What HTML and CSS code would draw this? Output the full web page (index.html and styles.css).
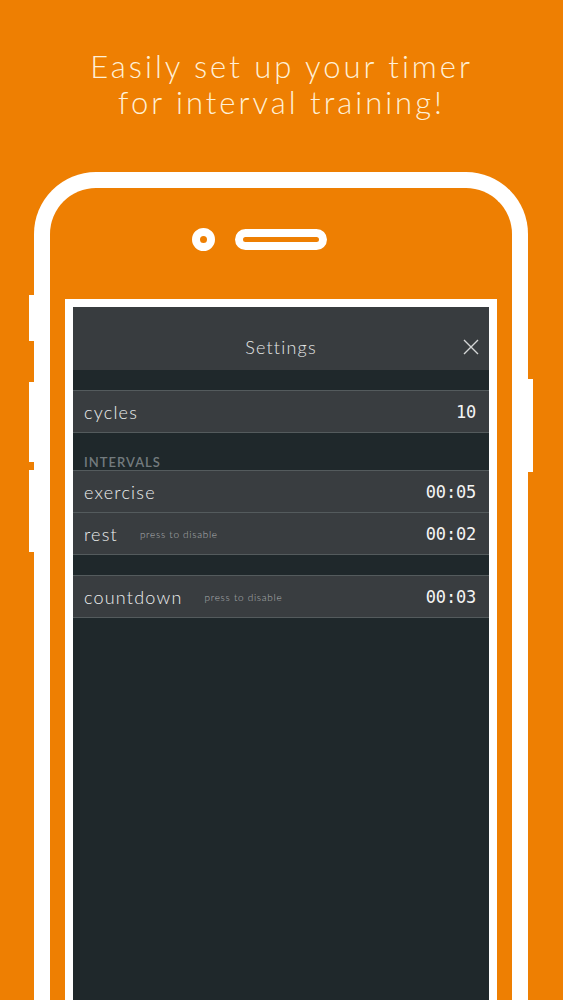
FILE: index.html
```html
<!DOCTYPE html>
<html lang="en">

<head>
    <meta charset="UTF-8">
    <meta name="viewport" content="width=device-width, initial-scale=1.0">
    <title>Interval Timer - Settings</title>
    <link rel="stylesheet" href="styles.css">
</head>

<body>
    <h1 class="headline">Easily set up your timer<br>for interval training!</h1>

    <div class="phone">
        <span class="side-btn left btn-1"></span>
        <span class="side-btn left btn-2"></span>
        <span class="side-btn left btn-3"></span>
        <span class="side-btn right btn-4"></span>

        <div class="phone-top">
            <span class="camera"></span>
            <span class="speaker"></span>
        </div>

        <div class="screen">
            <div class="screen-inner">
                <header class="bar">
                    <span class="bar-title">Settings</span>
                    <svg class="close" width="16" height="16" viewBox="0 0 16 16">
                        <path d="M1 1 L15 15 M15 1 L1 15" stroke="#d4d6d6" stroke-width="1.4" fill="none" />
                    </svg>
                </header>

                <div class="group first">
                    <div class="row">
                        <span class="label">cycles</span>
                        <span class="value">10</span>
                    </div>
                </div>

                <div class="section-title">INTERVALS</div>

                <div class="group">
                    <div class="row">
                        <span class="label">exercise</span>
                        <span class="value">00:05</span>
                    </div>
                    <div class="row">
                        <span class="label">rest</span>
                        <span class="hint">press to disable</span>
                        <span class="value">00:02</span>
                    </div>
                </div>

                <div class="group spaced">
                    <div class="row">
                        <span class="label">countdown</span>
                        <span class="hint">press to disable</span>
                        <span class="value">00:03</span>
                    </div>
                </div>
            </div>
        </div>
    </div>
</body>

</html>
```

FILE: styles.css
```css
body {
    margin: 0;
    padding: 0;
    height: 1000px;
    overflow: hidden;
    background-color: #ee7f02;
    font-family: Lato, "Open Sans", sans-serif;
}

.headline {
    margin: 0;
    padding-top: 48px;
    text-align: center;
    font-size: 31px;
    font-weight: 300;
    line-height: 36px;
    letter-spacing: 3px;
    color: #fff0d6;
}

/* phone outline */
.phone {
    position: relative;
    margin: 52px 0 0 34px;
    width: 462px;
    height: 900px;
    border: 16px solid #ffffff;
    border-bottom: none;
    border-radius: 62px 62px 0 0;
}

.side-btn {
    position: absolute;
    width: 5px;
    background-color: #ffffff;
}

.side-btn.left {
    left: -21px;
}

.side-btn.right {
    right: -21px;
}

.btn-1 {
    top: 107px;
    height: 46px;
}

.btn-2 {
    top: 194px;
    height: 80px;
}

.btn-3 {
    top: 282px;
    height: 82px;
}

.btn-4 {
    top: 191px;
    height: 93px;
}

.phone-top {
    display: flex;
    align-items: center;
    gap: 20px;
    padding: 40px 0 0 142px;
    height: 23px;
}

.camera {
    width: 7px;
    height: 7px;
    border: 8px solid #ffffff;
    border-radius: 50%;
}

.speaker {
    width: 76px;
    height: 5px;
    border: 8px solid #ffffff;
    border-radius: 11px;
}

.screen {
    margin: 48px 15px 0 15px;
    border: 8px solid #ffffff;
    border-bottom: none;
    height: 800px;
}

.screen-inner {
    background-color: #1f282b;
    height: 100%;
}

.bar {
    position: relative;
    display: flex;
    justify-content: center;
    box-sizing: border-box;
    height: 63px;
    padding-top: 29px;
    background-color: #383c3f;
}

.bar-title {
    font-size: 18px;
    font-weight: 300;
    line-height: 22px;
    letter-spacing: 1.2px;
    color: #e4e6e6;
}

.close {
    position: absolute;
    right: 10px;
    top: 32px;
}

.group {
    border-top: 1px solid #545b5d;
}

.group.first {
    margin-top: 20px;
}

.group.spaced {
    margin-top: 20px;
}

.row {
    display: flex;
    align-items: center;
    height: 41px;
    padding: 0 13px 0 11px;
    background-color: #393d40;
    border-bottom: 1px solid #545b5d;
}

.label {
    font-size: 18px;
    font-weight: 300;
    letter-spacing: 1.2px;
    color: #eceeee;
}

.hint {
    margin-left: 22px;
    font-size: 10px;
    font-weight: 300;
    letter-spacing: 0.7px;
    color: #b0b4b5;
}

.value {
    margin-left: auto;
    font-family: "DejaVu Sans Mono", monospace;
    font-size: 17px;
    letter-spacing: -0.2px;
    color: #f4f4f4;
}

.section-title {
    height: 37px;
    display: flex;
    align-items: flex-end;
    padding-left: 11px;
    font-size: 13px;
    font-weight: 600;
    letter-spacing: 1px;
    line-height: 16px;
    color: #737b7e;
}
```
